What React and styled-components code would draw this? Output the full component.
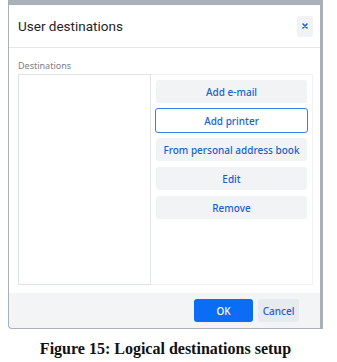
import React from "react";
import styled, { createGlobalStyle } from "styled-components";

const Global = createGlobalStyle`
  html, body {
    margin: 0;
    background: #ffffff;
  }
`;

const Page = styled.div`
  width: 337px;
  height: 362px;
  display: flex;
  flex-direction: column;
  font-family: "Noto Sans", "Open Sans", sans-serif;
`;

const Shot = styled.div`
  margin-left: 8px;
  width: 315px;
  box-sizing: border-box;
  padding: 5px 3px 1px 1px;
  background: #a9b0b9;
  border-bottom-left-radius: 4px;
`;

const Dialog = styled.div`
  background: #ffffff;
  display: flex;
  flex-direction: column;
  border-bottom-left-radius: 4px;
  overflow: hidden;
`;

const Header = styled.header`
  height: 42px;
  display: flex;
  align-items: center;
  justify-content: space-between;
  padding: 0 7px 0 9px;
  border-bottom: 1px solid #e4e6e9;
`;

const Title = styled.h1`
  margin: 0;
  font-family: Roboto, "Noto Sans", sans-serif;
  font-size: 13.5px;
  font-weight: 400;
  color: #1f2328;
`;

const CloseButton = styled.button`
  width: 16px;
  height: 21px;
  border: none;
  border-radius: 3px;
  background: #f1f2f4;
  padding: 0;
  display: flex;
  align-items: center;
  justify-content: center;
`;

const Body = styled.div`
  padding: 13px 7px 8px 9px;
  display: flex;
  flex-direction: column;
`;

const Label = styled.div`
  font-size: 9px;
  color: #7b8088;
  height: 13px;
  line-height: 10px;
`;

const Columns = styled.div`
  display: flex;
  height: 211px;
`;

const List = styled.div`
  width: 133px;
  box-sizing: border-box;
  border: 1px solid #dfe2e6;
  background: #fff;
`;

const Actions = styled.div`
  flex: 1;
  box-sizing: border-box;
  border: 1px solid #f1f2f4;
  border-left: none;
  padding: 5px 5px 0 5px;
  display: flex;
  flex-direction: column;
  gap: 6px;
`;

const ActionButton = styled.button`
  height: 23px;
  border-radius: 3px;
  border: ${p => (p.$focused ? "1.5px solid #3b7ee8" : "none")};
  background: ${p => (p.$focused ? "#ffffff" : "#f2f3f5")};
  color: #1c5fd0;
  font-family: inherit;
  font-size: 10px;
  font-weight: 500;
  padding: 0;
  ${p => p.$focused && "margin: -1px -1px; height: 25px;"}
`;

const Footer = styled.footer`
  height: 35px;
  background: #f3f4f6;
  display: flex;
  align-items: center;
  justify-content: flex-end;
  gap: 5px;
  padding-right: 21px;
`;

const FooterButton = styled.button`
  height: 23px;
  width: ${p => p.$width}px;
  border: none;
  border-radius: 3px;
  background: ${p => (p.$primary ? "#0b6cf6" : "#e7eaee")};
  color: ${p => (p.$primary ? "#ffffff" : "#1c5fd0")};
  font-family: inherit;
  font-size: 10px;
  font-weight: 500;
  padding: 0;
`;

const Caption = styled.div`
  margin-top: 11px;
  text-align: center;
  font-family: "Liberation Serif", "Times New Roman", serif;
  font-weight: 700;
  font-size: 16px;
  color: #111;
  padding-right: 6px;
`;

const actions = ["Add e-mail", "Add printer", "From personal address book", "Edit", "Remove"];

export default function App() {
  return (
    <Page>
      <Global />
      <Shot>
        <Dialog>
          <Header>
            <Title>User destinations</Title>
            <CloseButton aria-label="Close">
              <svg width="6" height="6" viewBox="0 0 6 6">
                <path d="M1 1L5 5M5 1L1 5" stroke="#1c5fd0" strokeWidth="1.6" strokeLinecap="round" />
              </svg>
            </CloseButton>
          </Header>
          <Body>
            <Label>Destinations</Label>
            <Columns>
              <List />
              <Actions>
                {actions.map(a => (
                  <ActionButton key={a} $focused={a === "Add printer"}>
                    {a}
                  </ActionButton>
                ))}
              </Actions>
            </Columns>
          </Body>
          <Footer>
            <FooterButton $primary $width={59}>OK</FooterButton>
            <FooterButton $width={41}>Cancel</FooterButton>
          </Footer>
        </Dialog>
      </Shot>
      <Caption>Figure 15: Logical destinations setup</Caption>
    </Page>
  );
}
